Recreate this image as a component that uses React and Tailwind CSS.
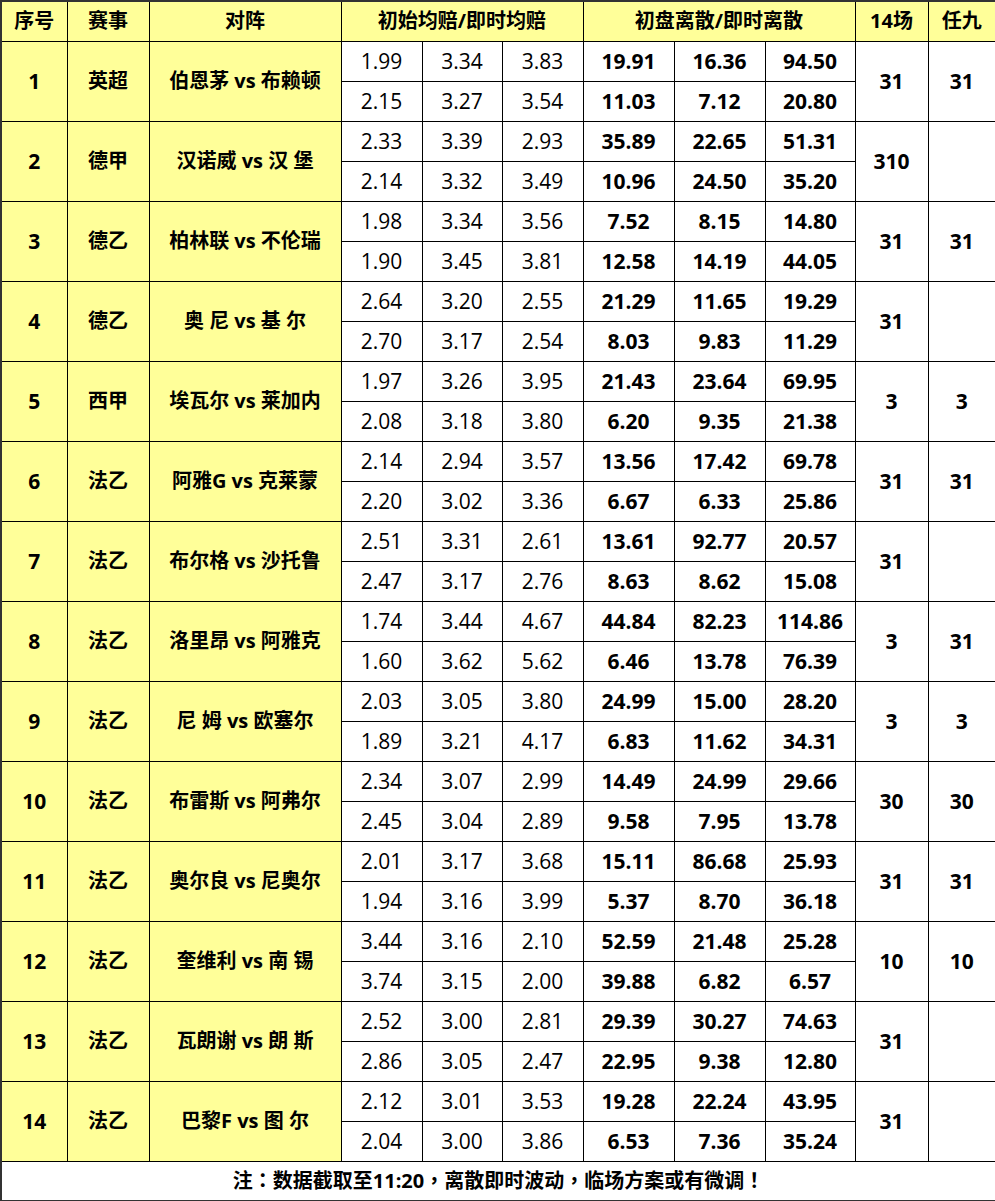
const rows = [
  ['1', '英超', '伯恩茅 vs 布赖顿', ['1.99', '3.34', '3.83'], ['19.91', '16.36', '94.50'], ['2.15', '3.27', '3.54'], ['11.03', '7.12', '20.80'], '31', '31'],
  ['2', '德甲', '汉诺威 vs 汉 堡', ['2.33', '3.39', '2.93'], ['35.89', '22.65', '51.31'], ['2.14', '3.32', '3.49'], ['10.96', '24.50', '35.20'], '310', ''],
  ['3', '德乙', '柏林联 vs 不伦瑞', ['1.98', '3.34', '3.56'], ['7.52', '8.15', '14.80'], ['1.90', '3.45', '3.81'], ['12.58', '14.19', '44.05'], '31', '31'],
  ['4', '德乙', '奥 尼 vs 基 尔', ['2.64', '3.20', '2.55'], ['21.29', '11.65', '19.29'], ['2.70', '3.17', '2.54'], ['8.03', '9.83', '11.29'], '31', ''],
  ['5', '西甲', '埃瓦尔 vs 莱加内', ['1.97', '3.26', '3.95'], ['21.43', '23.64', '69.95'], ['2.08', '3.18', '3.80'], ['6.20', '9.35', '21.38'], '3', '3'],
  ['6', '法乙', '阿雅G vs 克莱蒙', ['2.14', '2.94', '3.57'], ['13.56', '17.42', '69.78'], ['2.20', '3.02', '3.36'], ['6.67', '6.33', '25.86'], '31', '31'],
  ['7', '法乙', '布尔格 vs 沙托鲁', ['2.51', '3.31', '2.61'], ['13.61', '92.77', '20.57'], ['2.47', '3.17', '2.76'], ['8.63', '8.62', '15.08'], '31', ''],
  ['8', '法乙', '洛里昂 vs 阿雅克', ['1.74', '3.44', '4.67'], ['44.84', '82.23', '114.86'], ['1.60', '3.62', '5.62'], ['6.46', '13.78', '76.39'], '3', '31'],
  ['9', '法乙', '尼 姆 vs 欧塞尔', ['2.03', '3.05', '3.80'], ['24.99', '15.00', '28.20'], ['1.89', '3.21', '4.17'], ['6.83', '11.62', '34.31'], '3', '3'],
  ['10', '法乙', '布雷斯 vs 阿弗尔', ['2.34', '3.07', '2.99'], ['14.49', '24.99', '29.66'], ['2.45', '3.04', '2.89'], ['9.58', '7.95', '13.78'], '30', '30'],
  ['11', '法乙', '奥尔良 vs 尼奥尔', ['2.01', '3.17', '3.68'], ['15.11', '86.68', '25.93'], ['1.94', '3.16', '3.99'], ['5.37', '8.70', '36.18'], '31', '31'],
  ['12', '法乙', '奎维利 vs 南 锡', ['3.44', '3.16', '2.10'], ['52.59', '21.48', '25.28'], ['3.74', '3.15', '2.00'], ['39.88', '6.82', '6.57'], '10', '10'],
  ['13', '法乙', '瓦朗谢 vs 朗 斯', ['2.52', '3.00', '2.81'], ['29.39', '30.27', '74.63'], ['2.86', '3.05', '2.47'], ['22.95', '9.38', '12.80'], '31', ''],
  ['14', '法乙', '巴黎F vs 图 尔', ['2.12', '3.01', '3.53'], ['19.28', '22.24', '43.95'], ['2.04', '3.00', '3.86'], ['6.53', '7.36', '35.24'], '31', ''],
];

const cell = 'border border-black text-center align-middle p-0';
const yellow = 'bg-[#ffff99]';
const num = 'text-[21px]';

// centered full-width punctuation, like the original font
const P = ({ children }) => (
  <span style={{ fontFamily: '"Noto Sans CJK TC", sans-serif' }}>{children}</span>
);

export default function App() {
  return (
    <div className="w-[995px] bg-white text-black" style={{ fontFamily: '"Open Sans", "Noto Sans CJK SC", sans-serif' }}>
      <table className="w-[995px] table-fixed border-collapse border-2 border-[#333] text-[20px] leading-none">
        <colgroup>
          <col className="w-[66px]" />
          <col className="w-[82px]" />
          <col className="w-[192px]" />
          <col className="w-[81px]" />
          <col className="w-[80px]" />
          <col className="w-[81px]" />
          <col className="w-[91px]" />
          <col className="w-[91px]" />
          <col className="w-[90px]" />
          <col className="w-[73px]" />
          <col className="w-[68px]" />
        </colgroup>
        <thead>
          <tr className="h-[40px] font-bold">
            <th className={`${cell} ${yellow}`}>序号</th>
            <th className={`${cell} ${yellow}`}>赛事</th>
            <th className={`${cell} ${yellow}`}>对阵</th>
            <th colSpan={3} className={`${cell} ${yellow}`}>初始均赔/即时均赔</th>
            <th colSpan={3} className={`${cell} ${yellow}`}>初盘离散/即时离散</th>
            <th className={`${cell} ${yellow}`}>14场</th>
            <th className={`${cell} ${yellow}`}>任九</th>
          </tr>
        </thead>
        <tbody>
          {rows.map((r) => (
            <>
              <tr key={r[0] + 'a'} className="h-[40px]">
                <td rowSpan={2} className={`${cell} ${yellow} ${num} font-bold`}>{r[0]}</td>
                <td rowSpan={2} className={`${cell} ${yellow} font-bold`}>{r[1]}</td>
                <td rowSpan={2} className={`${cell} ${yellow} font-bold`}>{r[2]}</td>
                {r[3].map((v, i) => (
                  <td key={'o' + i} className={`${cell} ${num}`}>{v}</td>
                ))}
                {r[4].map((v, i) => (
                  <td key={'d' + i} className={`${cell} ${num} font-bold`}>{v}</td>
                ))}
                <td rowSpan={2} className={`${cell} ${num} font-bold`}>{r[7]}</td>
                <td rowSpan={2} className={`${cell} ${num} font-bold`}>{r[8]}</td>
              </tr>
              <tr key={r[0] + 'b'} className="h-[40px]">
                {r[5].map((v, i) => (
                  <td key={'o' + i} className={`${cell} ${num}`}>{v}</td>
                ))}
                {r[6].map((v, i) => (
                  <td key={'d' + i} className={`${cell} ${num} font-bold`}>{v}</td>
                ))}
              </tr>
            </>
          ))}
          <tr className="h-[40px]">
            <td colSpan={11} className={`${cell} font-bold`}>
              注<P>：</P>数据截取至11:20<P>，</P>离散即时波动<P>，</P>临场方案或有微调<P>！</P>
            </td>
          </tr>
        </tbody>
      </table>
    </div>
  );
}
